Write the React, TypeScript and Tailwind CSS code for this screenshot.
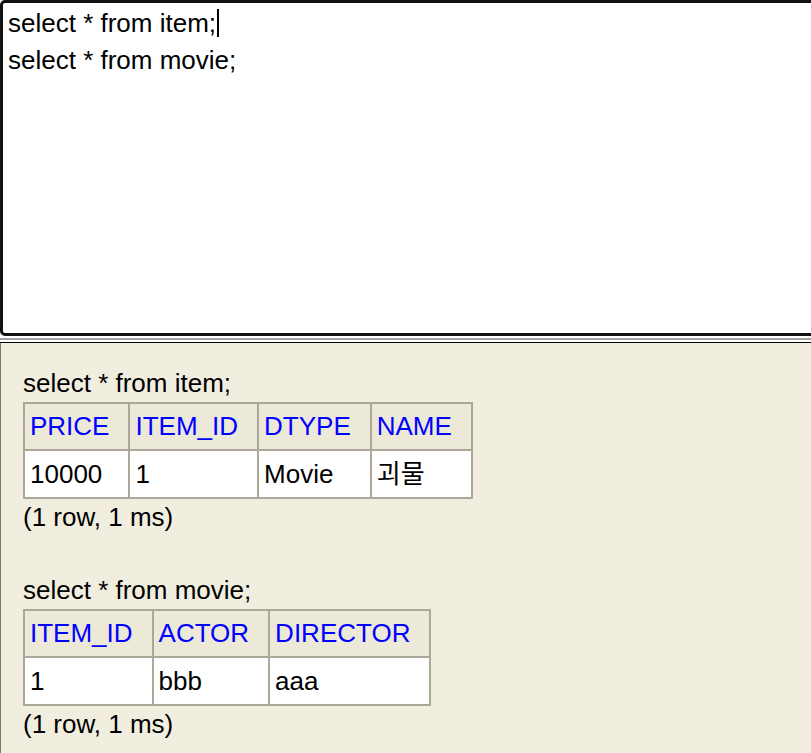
const font = {
  fontFamily: '"Liberation Sans", Arial, "Noto Sans CJK KR", sans-serif',
};

type Result = {
  sql: string;
  columns: string[];
  rows: string[][];
};

const results: Result[] = [
  {
    sql: "select * from item;",
    columns: ["PRICE", "ITEM_ID", "DTYPE", "NAME"],
    rows: [["10000", "1", "Movie", "괴물"]],
  },
  {
    sql: "select * from movie;",
    columns: ["ITEM_ID", "ACTOR", "DIRECTOR"],
    rows: [["1", "bbb", "aaa"]],
  },
];

function ResultTable({ r, first }: { r: Result; first: boolean }) {
  return (
    <div className={first ? "" : "mt-[43px]"}>
      <p className="leading-[30px]">{r.sql}</p>
      <table className="mt-[4px] border-collapse border-2 border-[#aca899]">
        <thead>
          <tr>
            {r.columns.map((c) => (
              <th
                key={c}
                className="h-[47px] border-2 border-[#aca899] bg-[#ece9d8] pl-[5px] pr-[19px] text-left font-normal text-[#0000ff]"
              >
                {c}
              </th>
            ))}
          </tr>
        </thead>
        <tbody>
          {r.rows.map((row, i) => (
            <tr key={i}>
              {row.map((v, j) => (
                <td
                  key={j}
                  className="h-[48px] border-2 border-[#aca899] bg-white pl-[5px] pr-[19px] text-black"
                >
                  {v}
                </td>
              ))}
            </tr>
          ))}
        </tbody>
      </table>
      <p className="mt-[3px] leading-[30px]">(1 row, 1 ms)</p>
    </div>
  );
}

export default function App() {
  return (
    <div
      className="h-[753px] w-[811px] overflow-hidden bg-white text-[26px] text-black"
      style={font}
    >
      {/* query editor */}
      <div className="h-[336px] w-[840px] rounded-[5px] border-[3px] border-[#111] bg-white pl-[5px] pt-[2px] leading-[37px]">
        <div>
          select * from item;
          <span className="ml-[1px] inline-block h-[28px] w-[2px] align-[-5px] bg-black" />
        </div>
        <div>select * from movie;</div>
      </div>

      {/* frame splitter */}
      <div className="mt-[2px] h-[2px] bg-[#a0a0a0]" />
      <div className="mt-[2px] h-px bg-black" />

      {/* results */}
      <div className="h-[410px] border-l border-[#7a7868] bg-[#f2eedf] pl-[22px] pt-[25px]">
        {results.map((r, i) => (
          <ResultTable key={r.sql} r={r} first={i === 0} />
        ))}
      </div>
    </div>
  );
}
